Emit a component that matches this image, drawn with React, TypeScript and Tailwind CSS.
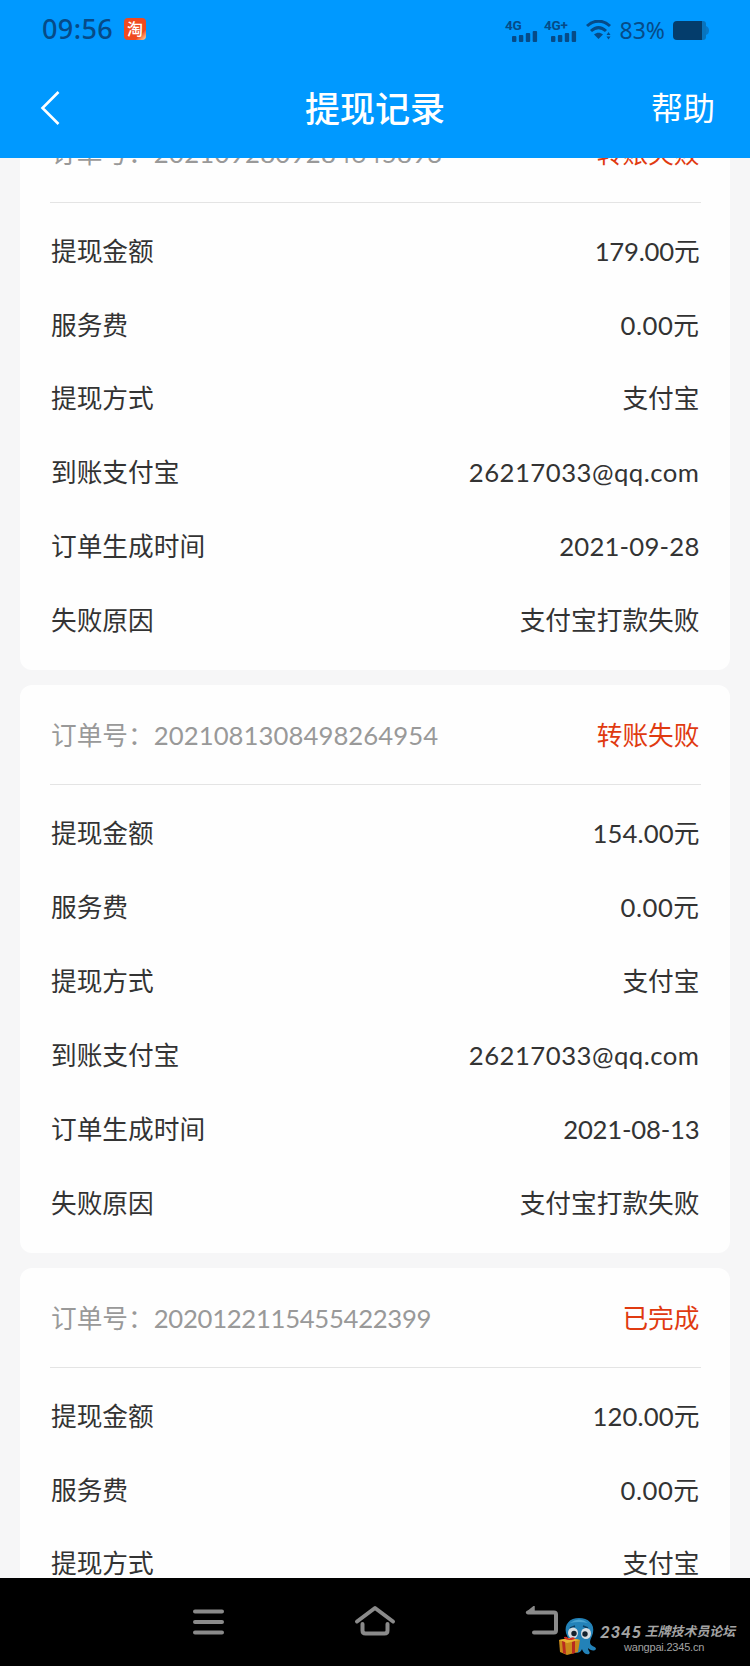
type Row = { label: string; value: string; tracking?: string };

type Order = {
  id: string;
  idTracking: string;
  status: string;
  rows: Row[];
};

const orders: Order[] = [
  {
    id: '2021092809284645893',
    idTracking: 'tracking-[0.3px]',
    status: '转账失败',
    rows: [
      { label: '提现金额', value: '179.00元', tracking: 'tracking-[-0.2px]' },
      { label: '服务费', value: '0.00元', tracking: 'tracking-[0.5px]' },
      { label: '提现方式', value: '支付宝' },
      { label: '到账支付宝', value: '26217033@qq.com', tracking: 'tracking-[0.5px]' },
      { label: '订单生成时间', value: '2021-09-28', tracking: 'tracking-[0.2px]' },
      { label: '失败原因', value: '支付宝打款失败' },
    ],
  },
  {
    id: '2021081308498264954',
    idTracking: 'tracking-[0.07px]',
    status: '转账失败',
    rows: [
      { label: '提现金额', value: '154.00元', tracking: 'tracking-[0.1px]' },
      { label: '服务费', value: '0.00元', tracking: 'tracking-[0.5px]' },
      { label: '提现方式', value: '支付宝' },
      { label: '到账支付宝', value: '26217033@qq.com', tracking: 'tracking-[0.5px]' },
      { label: '订单生成时间', value: '2021-08-13', tracking: 'tracking-[-0.2px]' },
      { label: '失败原因', value: '支付宝打款失败' },
    ],
  },
  {
    id: '2020122115455422399',
    idTracking: 'tracking-[-0.3px]',
    status: '已完成',
    rows: [
      { label: '提现金额', value: '120.00元', tracking: 'tracking-[0.1px]' },
      { label: '服务费', value: '0.00元', tracking: 'tracking-[0.5px]' },
      { label: '提现方式', value: '支付宝' },
    ],
  },
];

const signalBars = [6, 7, 9, 11];

const Signal = ({ label }: { label: string }) => (
  <svg className="h-6 w-8 overflow-visible" viewBox="0 0 32 24" fill="#064b88">
    <text x="-1" y="12" fontSize="13.5" fontWeight="700" fontFamily="Roboto" letterSpacing="-0.2">
      {label}
    </text>
    {signalBars.map((h, i) => (
      <rect key={i} x={6 + i * 6.9} y={24 - h} width="4.4" height={h} rx="1" />
    ))}
  </svg>
);

const StatusBar = () => (
  <div className="flex h-[58px] items-center justify-between pl-[42px] pr-[41px] text-[#064b88]">
    <div className="flex items-center">
      <span className="font-['Noto_Sans'] text-[27px] font-medium tracking-[0.4px]">09:56</span>
      <span className="ml-[11px] flex h-[22px] w-[22px] items-center justify-center rounded bg-linear-to-br from-[#f04a20] from-75% to-[#ffd9a0] text-[16px] font-medium leading-none text-white">
        淘
      </span>
    </div>
    <div className="flex items-center pt-0.5">
      <Signal label="4G" />
      <span className="w-[7px]" />
      <Signal label="4G+" />
      <svg className="ml-[9px] h-5 w-[26px]" viewBox="0 0 26 20" fill="none" stroke="#064b88" strokeWidth="3">
        <path d="M1 6C8-.5 17-.5 24 6M5 11c5-4.500 10-4.500 15 0" />
        <path d="M8 14.500c3-2.500 6-2.500 9 0L12.500 19z" fill="#064b88" stroke="none" />
        <path d="M20.500 15l2-3 2 3zM20.500 16.500l2 3 2-3z" fill="#064b88" stroke="none" />
      </svg>
      <span className="ml-2 font-['Noto_Sans'] text-[23px] leading-none">83%</span>
      <svg className="ml-2 h-[19px] w-9" viewBox="0 0 36 19">
        <rect x="24" width="9" height="19" rx="3" fill="#0874be" />
        <path d="M33 5q3 1 3 4.500t-3 4.500z" fill="#0878c8" />
        <path d="M4 0h25v19H4q-4 0-4-4V4q0-4 4-4z" fill="#043d6c" />
      </svg>
    </div>
  </div>
);

const Header = () => (
  <header className="h-[158px] shrink-0 bg-[#0099ff]">
    <StatusBar />
    <div className="grid h-[100px] grid-cols-3 items-center px-[35px] text-white">
      <svg className="ml-[5px] h-[34px] w-5" viewBox="0 0 20 34" fill="none" stroke="white" strokeWidth="2.600">
        <path d="M18.500 1L2.500 17l16 16" />
      </svg>
      <h1 className="text-center text-[35px] font-medium leading-none">提现记录</h1>
      <span className="text-right text-[32px] leading-none">帮助</span>
    </div>
  </header>
);

const OrderCard = ({ order }: { order: Order }) => (
  <section className="h-[567.5px] shrink-0 rounded-xl bg-[#fefefe] pl-[30px] pr-[29px] text-[25.7px]">
    <div className="flex h-[100px] items-center justify-between border-b border-[#e4e4e4] pl-px pr-[1.5px] pt-0.5">
      <p className="text-[#999]">
        订单号：<span className={order.idTracking}>{order.id}</span>
      </p>
      <span className="text-[#e03a10]">{order.status}</span>
    </div>
    <dl className="pt-[11.5px]">
      {order.rows.map((row) => (
        <div key={row.label} className="flex h-[73.9px] items-center justify-between pl-px pr-[1.5px] text-[#333]">
          <dt>{row.label}</dt>
          <dd className={row.tracking}>{row.value}</dd>
        </div>
      ))}
    </dl>
  </section>
);

const Mascot = () => (
  <svg className="h-[38px] w-[38px]" viewBox="0 0 38 38">
    <path
      d="M8 15C6 6 12 0 21 0s16 6 14 15c-1 4-3 6-3 9 0 5 6 4 6 7-2 3-6 1-8-1 0 3 3 4 1 6-4 1-6-2-7-5-1 3-4 5-8 3l-4-12q-3-3-4-7z"
      fill="#2382b8"
    />
    <path d="M12 5q9-7 18 0-9-2-18 0z" fill="#4ba3d0" />
    <path d="M12 10l5-2M25 8l5 2" stroke="#0c3d60" strokeWidth="1.400" />
    <ellipse cx="15" cy="15" rx="5" ry="5.500" fill="#d5dde2" />
    <ellipse cx="28" cy="15.500" rx="5" ry="5.500" fill="#d5dde2" />
    <circle cx="16" cy="15.500" r="2.700" fill="#14222e" />
    <circle cx="27" cy="16" r="2.700" fill="#14222e" />
    <path d="M1 22l11-2 10 2-2 12-11 3-7-3z" fill="#c98a1a" />
    <path d="M1 22l8 3 13-3-10-2z" fill="#e8b332" />
    <path d="M4 23l1 12 3 1-1-12zM14 24v12l3-1V23z" fill="#b92a20" />
    <path d="M11 22q-6-1-5-3 3-1 5 2 3-3 6-1 0 2-6 2z" fill="#d12b20" />
  </svg>
);

const NavBar = () => (
  <footer className="relative flex h-[88px] shrink-0 items-center bg-black text-[#8a8a8a]">
    <svg className="ml-[192px] h-8 w-8" viewBox="0 0 32 32" stroke="currentColor" strokeWidth="4" strokeLinecap="round">
      <path d="M3 5.500h27M3 16h27M3 26.500h27" />
    </svg>
    <svg
      className="-mt-1 ml-[130px] h-8 w-[42px]"
      viewBox="0 0 42 32"
      fill="none"
      stroke="currentColor"
      strokeWidth="4"
      strokeLinecap="round"
      strokeLinejoin="round"
    >
      <path d="M3 17.500L21 4l18 13.500M8.500 20v6.500q0 3 3 3h19q3 0 3-3V20" />
    </svg>
    <svg
      className="ml-[127px] h-8 w-9"
      viewBox="0 0 36 32"
      fill="none"
      stroke="currentColor"
      strokeWidth="4"
      strokeLinecap="round"
      strokeLinejoin="round"
    >
      <path d="M5 6.500h26q2 0 2 2v16q0 2-2 2H11" />
      <path d="M3.500 6.500L11 .5v6z" fill="currentColor" strokeWidth="1.500" />
    </svg>
    <div className="absolute left-[558px] top-[40px] flex items-center">
      <Mascot />
      <div className="ml-1 whitespace-nowrap pt-0.5 leading-none text-[#a3a3a3]">
        <p className="flex items-center text-[12.9px] font-bold italic">
          <span className="mr-[3px] text-[17px] font-black tracking-[0.6px]">2345</span>
          王牌技术员论坛
        </p>
        <p className="mt-0.5 pl-6 font-['Liberation_Sans'] text-[11px] tracking-[-0.2px]">wangpai.2345.cn</p>
      </div>
    </div>
  </footer>
);

const App = () => (
  <div className="flex h-[1666px] w-[750px] flex-col overflow-hidden bg-[#f6f6f7] font-['Lato','Noto_Sans_CJK_SC',sans-serif]">
    <Header />
    <main className="min-h-0 flex-1 overflow-hidden px-5">
      <div className="-mt-[55.5px] flex flex-col gap-[15px]">
        {orders.map((order) => (
          <OrderCard key={order.id} order={order} />
        ))}
      </div>
    </main>
    <NavBar />
  </div>
);

export default App;
